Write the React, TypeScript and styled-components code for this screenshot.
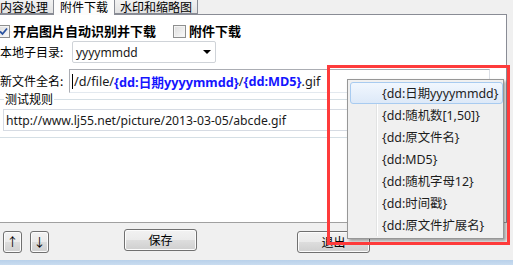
import React from 'react';
import styled, { createGlobalStyle } from 'styled-components';

const GlobalStyle = createGlobalStyle`
  html, body {
    margin: 0;
    padding: 0;
    background: #f0f0f0;
    overflow: hidden;
  }
`;

const UI_FONT = `"Noto Sans CJK SC", "Noto Sans", sans-serif`;
const LATIN_FONT = `"Noto Sans", "Noto Sans CJK SC", sans-serif`;

const Window = styled.div`
  position: relative;
  width: 513px;
  height: 265px;
  display: flex;
  flex-direction: column;
  background: #f0f0f0;
  font-family: ${UI_FONT};
  font-size: 12px;
  color: #000;
  overflow: hidden;
`;

const TabStrip = styled.div`
  height: 14px;
  display: flex;
  align-items: flex-end;
  margin-left: -6px;
  position: relative;
  z-index: 1;
`;

const Tab = styled.div<{ $active?: boolean }>`
  box-sizing: border-box;
  height: ${({ $active }) => ($active ? '15px' : '14px')};
  margin-bottom: ${({ $active }) => ($active ? '-1px' : '0')};
  padding: ${({ $active }) => ($active ? '0 6px' : '0 5px')};
  margin-left: ${({ $active }) => ($active ? '-1px' : '0')};
  margin-right: ${({ $active }) => ($active ? '-1px' : '0')};
  border: 1px solid #898c95;
  border-top: none;
  border-bottom: ${({ $active }) => ($active ? 'none' : '1px solid #898c95')};
  background: ${({ $active }) =>
    $active ? '#fcfcfc' : 'linear-gradient(#f2f2f2, #e3e3e3)'};
  line-height: 13px;
  font-size: 12px;
  white-space: nowrap;
`;

const Panel = styled.div`
  box-sizing: border-box;
  width: 507px;
  height: 209px;
  background: #fff;
  border-top: 1px solid #898c95;
  border-right: 1px solid #898c95;
  border-bottom: 1px solid #a0a0a0;
  display: flex;
  flex-direction: column;
  padding-top: 8px;
`;

const Row = styled.div<{ $mt?: number }>`
  display: flex;
  align-items: center;
  margin-top: ${({ $mt }) => $mt ?? 0}px;
`;

const CheckBox = styled.span<{ $ml?: number }>`
  box-sizing: border-box;
  width: 13px;
  height: 13px;
  margin-left: ${({ $ml }) => $ml ?? 0}px;
  border: 1px solid #8e8f8f;
  background: linear-gradient(135deg, #dcdcdc, #fbfbfb);
  box-shadow: inset 0 0 0 1px #f4f4f4;
  display: flex;
  align-items: center;
  justify-content: center;
`;

const BoldLabel = styled.span<{ $mr?: number }>`
  font-weight: 700;
  font-size: 13px;
  line-height: 16px;
  margin-left: 3px;
  margin-right: ${({ $mr }) => $mr ?? 0}px;
  white-space: nowrap;
`;

const FieldLabel = styled.span<{ $w: number }>`
  width: ${({ $w }) => $w}px;
  flex: none;
  white-space: nowrap;
  font-size: 12px;
  line-height: 14px;
`;

const Combo = styled.div`
  box-sizing: border-box;
  width: 144px;
  height: 22px;
  border: 1px solid #cfd3d8;
  border-radius: 2px;
  display: flex;
  align-items: center;
  justify-content: space-between;
  padding: 0 4px 0 3px;
  font-family: ${LATIN_FONT};
  font-size: 12px;
  color: #1a1a1a;
`;

const ComboArrow = styled.span`
  width: 0;
  height: 0;
  border-left: 4px solid transparent;
  border-right: 4px solid transparent;
  border-top: 4px solid #000;
`;

const FileNameBox = styled.div`
  box-sizing: border-box;
  width: 421px;
  height: 24px;
  border: 1px solid #abadb3;
  border-right-color: #dbdfe6;
  border-bottom-color: #e3e9ef;
  display: flex;
  align-items: center;
  padding-left: 2px;
  font-family: ${LATIN_FONT};
  font-size: 12.7px;
  color: #1a1a1a;
  white-space: nowrap;
`;

const Caret = styled.span`
  width: 1px;
  height: 15px;
  background: #000;
  margin-right: 1px;
`;

const Token = styled.span`
  color: #1515ff;
  font-weight: 700;
`;

const GroupBox = styled.fieldset`
  box-sizing: border-box;
  width: 490px;
  margin: 0 0 0 -1px;
  padding: 0 0 6px 3px;
  border: 1px solid #d5dfe5;
  min-width: 0;
`;

const GroupLegend = styled.legend`
  padding: 0 1px;
  margin-left: 1px;
  font-size: 12px;
  line-height: 12px;
`;

const UrlBox = styled.div`
  box-sizing: border-box;
  height: 22px;
  margin-top: 4px;
  border: 1px solid #d6dbe3;
  display: flex;
  align-items: center;
  padding-left: 2px;
  font-family: ${LATIN_FONT};
  font-size: 12.2px;
  color: #1a1a1a;
  white-space: nowrap;
`;

const Footer = styled.div`
  height: 36px;
  display: flex;
  align-items: flex-start;
  padding: 8px 0 0 3px;
  box-sizing: border-box;
`;

const Button = styled.div<{ $w: number; $ml?: number; $mt?: number }>`
  box-sizing: border-box;
  width: ${({ $w }) => $w}px;
  height: 22px;
  margin-left: ${({ $ml }) => $ml ?? 0}px;
  margin-top: ${({ $mt }) => $mt ?? 0}px;
  border: 1px solid #707070;
  border-radius: 3px;
  background: linear-gradient(#f2f2f2 0%, #ebebeb 48%, #dddddd 52%, #cfcfcf 100%);
  box-shadow: inset 0 0 0 1px #fcfcfc;
  display: flex;
  align-items: center;
  justify-content: center;
  font-size: 12px;
  line-height: 12px;
`;

const FrameEdge = styled.div`
  flex: 1;
  margin-top: 1px;
  background: linear-gradient(#b9d1ea, #c9dcf0);
`;

const Annotation = styled.div`
  position: absolute;
  left: 327px;
  top: 65px;
  width: 183px;
  height: 180px;
  box-sizing: border-box;
  border: 3px solid #fe3b3b;
  z-index: 3;
  pointer-events: none;
`;

const Menu = styled.div`
  position: absolute;
  left: 347px;
  top: 79px;
  width: 157px;
  box-sizing: border-box;
  padding: 2px 0 2px 2px;
  background: #f0f0f0;
  border: 1px solid #979797;
  box-shadow: 2px 2px 3px rgba(0, 0, 0, 0.35);
  z-index: 2;

  &::before {
    content: '';
    position: absolute;
    left: 28px;
    top: 2px;
    bottom: 2px;
    width: 1px;
    background: #e2e3e3;
    box-shadow: 1px 0 0 #fff;
  }
`;

const MenuItem = styled.div<{ $hot?: boolean }>`
  position: relative;
  box-sizing: border-box;
  height: 22px;
  display: flex;
  align-items: center;
  padding-left: 31px;
  border: 1px solid ${({ $hot }) => ($hot ? '#a8cbf0' : 'transparent')};
  border-radius: 3px;
  background: ${({ $hot }) =>
    $hot ? 'linear-gradient(#f1f7fe, #dde9f8)' : 'transparent'};
  font-family: ${LATIN_FONT};
  font-size: 12.4px;
  color: #1d1d1d;
  white-space: nowrap;
  z-index: 1;
`;

const CheckMark = () => (
  <svg width="9" height="9" viewBox="0 0 9 9">
    <path d="M1 4.5 L3.5 7 L8 1.5" fill="none" stroke="#2b53a0" strokeWidth="1.8" />
  </svg>
);

const menuItems = [
  '{dd:日期yyyymmdd}',
  '{dd:随机数[1,50]}',
  '{dd:原文件名}',
  '{dd:MD5}',
  '{dd:随机字母12}',
  '{dd:时间戳}',
  '{dd:原文件扩展名}',
];

const App: React.FC = () => {
  return (
    <>
      <GlobalStyle />
      <Window>
        <TabStrip>
          <Tab>内容处理</Tab>
          <Tab $active>附件下载</Tab>
          <Tab>水印和缩略图</Tab>
        </TabStrip>
        <Panel>
          <Row>
            <CheckBox $ml={-3}>
              <CheckMark />
            </CheckBox>
            <BoldLabel $mr={17}>开启图片自动识别并下载</BoldLabel>
            <CheckBox />
            <BoldLabel>附件下载</BoldLabel>
          </Row>
          <Row $mt={2}>
            <FieldLabel $w={72}>本地子目录:</FieldLabel>
            <Combo>
              <span>yyyymmdd</span>
              <ComboArrow />
            </Combo>
          </Row>
          <Row $mt={6}>
            <FieldLabel $w={69}>新文件全名:</FieldLabel>
            <FileNameBox>
              <Caret />
              /d/file/<Token>{'{dd:日期yyyymmdd}'}</Token>/<Token>{'{dd:MD5}'}</Token>.gif
            </FileNameBox>
          </Row>
          <GroupBox>
            <GroupLegend>测试规则</GroupLegend>
            <UrlBox>http://www.lj55.net/picture/2013-03-05/abcde.gif</UrlBox>
          </GroupBox>
        </Panel>
        <Footer>
          <Button $w={19}>↑</Button>
          <Button $w={19} $ml={8}>↓</Button>
          <Button $w={73} $ml={75} $mt={-2}>保存</Button>
          <Button $w={73} $ml={100}>退出</Button>
        </Footer>
        <FrameEdge />
        <Menu>
          {menuItems.map((item, i) => (
            <MenuItem key={item} $hot={i === 0}>
              {item}
            </MenuItem>
          ))}
        </Menu>
        <Annotation />
      </Window>
    </>
  );
};

export default App;
